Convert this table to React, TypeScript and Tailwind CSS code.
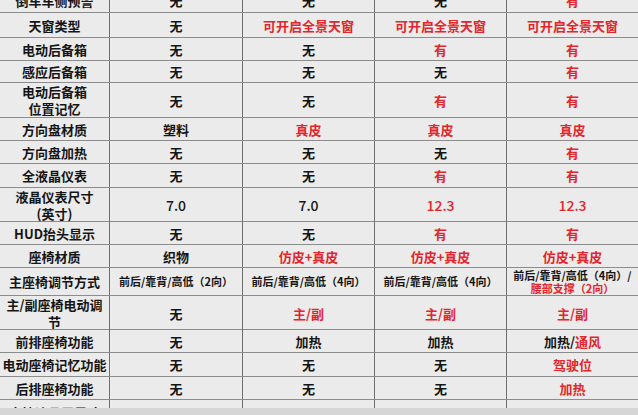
import React from "react";

type Cell = React.ReactNode;
type Row = { h: number; label: Cell; cells: Cell[] };

const R = ({ children }: { children: React.ReactNode }) => (
  <span className="text-[#e2262b]">{children}</span>
);

const N = ({ children }: { children: React.ReactNode }) => (
  <span className="text-[14px] font-medium">{children}</span>
);

const rows: Row[] = [
  { h: 25, label: "倒车车侧预警", cells: ["无", "无", "无", <R>有</R>] },
  { h: 25, label: "天窗类型", cells: ["无", <R>可开启全景天窗</R>, <R>可开启全景天窗</R>, <R>可开启全景天窗</R>] },
  { h: 23, label: "电动后备箱", cells: ["无", "无", <R>有</R>, <R>有</R>] },
  { h: 22, label: "感应后备箱", cells: ["无", "无", "无", <R>有</R>] },
  { h: 35, label: <>电动后备箱<br />位置记忆</>, cells: ["无", "无", <R>有</R>, <R>有</R>] },
  { h: 23, label: "方向盘材质", cells: ["塑料", <R>真皮</R>, <R>真皮</R>, <R>真皮</R>] },
  { h: 23, label: "方向盘加热", cells: ["无", "无", "无", <R>有</R>] },
  { h: 24, label: "全液晶仪表", cells: ["无", "无", <R>有</R>, <R>有</R>] },
  { h: 34, label: <>液晶仪表尺寸<br />(英寸)</>, cells: [<N>7.0</N>, <N>7.0</N>, <R><N>12.3</N></R>, <R><N>12.3</N></R>] },
  { h: 23, label: "HUD抬头显示", cells: ["无", "无", <R>有</R>, <R>有</R>] },
  { h: 23, label: "座椅材质", cells: ["织物", <R>仿皮+真皮</R>, <R>仿皮+真皮</R>, <R>仿皮+真皮</R>] },
  {
    h: 28,
    label: "主座椅调节方式",
    cells: [
      <span className="text-[11px]">前后/靠背/高低（2向）</span>,
      <span className="text-[11px]">前后/靠背/高低（4向）</span>,
      <span className="text-[11px]">前后/靠背/高低（4向）</span>,
      <span className="text-[11px] leading-[13px]">
        前后/靠背/高低（4向）/<br />
        <R>腰部支撑（2向）</R>
      </span>,
    ],
  },
  { h: 34, label: <>主/副座椅电动调<br />节</>, cells: ["无", <R>主/副</R>, <R>主/副</R>, <R>主/副</R>] },
  { h: 23, label: "前排座椅功能", cells: ["无", "加热", "加热", <>加热/<R>通风</R></>] },
  { h: 24, label: "电动座椅记忆功能", cells: ["无", "无", "无", <R>驾驶位</R>] },
  { h: 23, label: "后排座椅功能", cells: ["无", "无", "无", <R>加热</R>] },
  { h: 25, label: "中控液晶屏尺寸", cells: ["", "", "", ""] },
];

export default function App() {
  return (
    <div
      className="flex h-[415px] w-[638px] flex-col overflow-hidden bg-[#ebebeb] text-[13px] font-bold text-[#151515]"
      style={{ fontFamily: '"Noto Sans CJK SC", "Noto Sans", sans-serif' }}
    >
      <div className="h-[408px] shrink-0 overflow-hidden">
        <div className="-mt-[12px]">
          {rows.map((r, i) => (
            <div
              key={i}
              className="grid grid-cols-[110px_133px_132px_132px_131px] border-b border-[#8c8c8c]"
              style={{ height: r.h }}
            >
              <div className="flex items-center justify-center border-r border-[#6f6f6f] text-center leading-[17px]">
                {r.label}
              </div>
              {r.cells.map((c, j) => (
                <div
                  key={j}
                  className={`flex items-center justify-center text-center leading-[17px] ${
                    j < 3 ? "border-r border-[#6f6f6f]" : ""
                  }`}
                >
                  {c}
                </div>
              ))}
            </div>
          ))}
        </div>
      </div>
      <div className="flex-1 bg-[#d6d6d6]" />
    </div>
  );
}
